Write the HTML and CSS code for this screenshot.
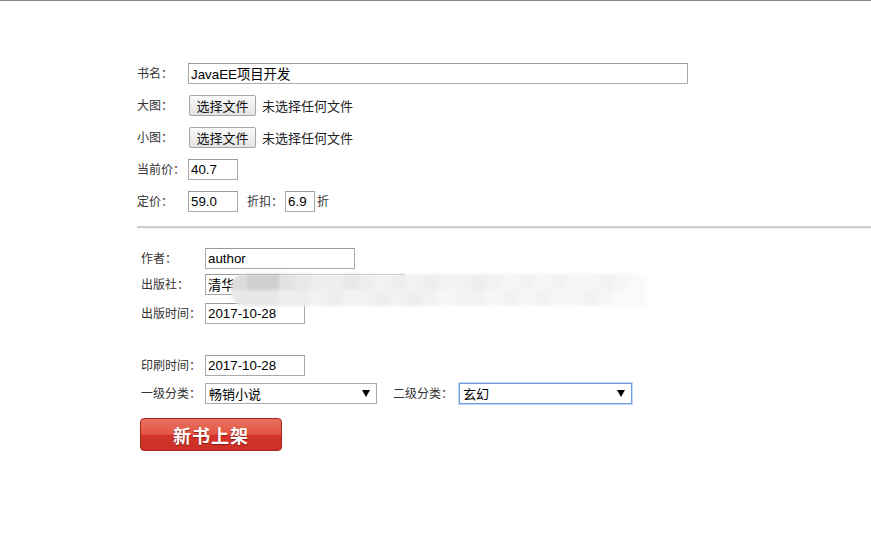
FILE: index.html
```html
<!DOCTYPE html>
<html lang="zh-CN">
<head>
<meta charset="utf-8">
<title>新书上架</title>
<link rel="stylesheet" href="styles.css">
</head>
<body>
<form class="page">
  <div class="basic">
    <div class="row">
      <span class="label">书名：</span>
      <input class="field w-title" type="text" value="JavaEE项目开发">
    </div>
    <div class="row">
      <span class="label">大图：</span>
      <span class="file"><button type="button" class="file-btn">选择文件</button><span class="file-name">未选择任何文件</span></span>
    </div>
    <div class="row">
      <span class="label">小图：</span>
      <span class="file"><button type="button" class="file-btn">选择文件</button><span class="file-name">未选择任何文件</span></span>
    </div>
    <div class="row">
      <span class="label">当前价：</span>
      <input class="field w-price" type="text" value="40.7">
    </div>
    <div class="row">
      <span class="label">定价：</span>
      <span class="inline">
        <input class="field w-price" type="text" value="59.0">
        <span class="label discount-label">折扣：</span>
        <input class="field w-disc" type="text" value="6.9">
        <span class="label unit">折</span>
      </span>
    </div>
  </div>
  <hr class="divider">
  <div class="detail">
    <div class="row2">
      <span class="label">作者：</span>
      <input class="field w-author" type="text" value="author">
    </div>
    <div class="row2 publisher">
      <span class="label">出版社：</span>
      <input class="field w-pub" type="text" value="清华大学出版社">
      <div class="mosaic" aria-hidden="true">
        <i class="g2"></i><i class="g1"></i><i class="g1"></i><i class="g3"></i><i class="g4"></i><i class="g5"></i><i class="g5"></i><i class="g4"></i><i class="g5"></i><i class="g6"></i><i class="g5"></i><i class="g6"></i><i class="g5"></i><i class="g6"></i><i class="g6"></i><i class="g5"></i><i class="g6"></i><i class="g7"></i><i class="g6"></i><i class="g7"></i><i class="g6"></i><i class="g7"></i><i class="g7"></i><i class="g6"></i><i class="g7"></i><i class="g8"></i>
        <i class="g4"></i><i class="g4"></i><i class="g4"></i><i class="g5"></i><i class="g5"></i><i class="g6"></i><i class="g5"></i><i class="g6"></i><i class="g6"></i><i class="g5"></i><i class="g6"></i><i class="g5"></i><i class="g6"></i><i class="g7"></i><i class="g6"></i><i class="g6"></i><i class="g7"></i><i class="g6"></i><i class="g7"></i><i class="g6"></i><i class="g7"></i><i class="g7"></i><i class="g6"></i><i class="g7"></i><i class="g8"></i><i class="g8"></i>
      </div>
    </div>
    <div class="row2 gap-s">
      <span class="label">出版时间：</span>
      <input class="field w-date" type="text" value="2017-10-28">
    </div>
    <div class="row2 gap-l">
      <span class="label">印刷时间：</span>
      <input class="field w-date" type="text" value="2017-10-28">
    </div>
    <div class="row2 gap-xs">
      <span class="label">一级分类：</span>
      <span class="select w-sel1"><span>畅销小说</span><svg class="arrow" width="8" height="7" viewBox="0 0 8 7"><path d="M0 0H8L4 7Z" fill="#000"/></svg></span>
      <span class="label cat2-label">二级分类：</span>
      <span class="select w-sel2 focused"><span>玄幻</span><svg class="arrow" width="8" height="7" viewBox="0 0 8 7"><path d="M0 0H8L4 7Z" fill="#000"/></svg></span>
    </div>
    <button type="button" class="submit">新书上架</button>
  </div>
</form>
</body>
</html>
```
FILE: styles.css
```css
html, body {
  margin: 0;
  padding: 0;
  background: #fff;
}
body {
  border-top: 1px solid #858585;
  font-family: "Noto Sans CJK SC", "Liberation Sans", sans-serif;
  font-size: 12px;
  color: #333;
}
.page {
  margin: 0;
}
.basic {
  margin-top: 56px;
  padding-left: 137px;
}
.row {
  display: flex;
  align-items: center;
  height: 32px;
}
.row .label {
  width: 51px;
  flex: none;
}
.label {
  font-size: 12px;
  line-height: 14px;
  color: #333;
  white-space: nowrap;
}
.field {
  box-sizing: border-box;
  height: 21px;
  margin: 0;
  padding: 0 2px;
  border: 1px solid #a9a9a9;
  border-top-color: #999;
  font-family: "Liberation Sans", "Noto Sans CJK SC", sans-serif;
  font-size: 13.33px;
  color: #000;
  background: #fff;
  outline: none;
}
.w-title { width: 500px; }
.w-price { width: 50px; }
.w-disc { width: 30px; }
.w-author { width: 150px; }
.w-pub { width: 200px; }
.w-date { width: 100px; }
.inline {
  display: flex;
  align-items: center;
}
.row .discount-label {
  width: auto;
  margin-left: 9px;
  margin-right: 2px;
}
.row .unit {
  width: auto;
  margin-left: 2px;
}
.file {
  display: flex;
  align-items: center;
}
.file-btn {
  box-sizing: border-box;
  width: 67px;
  height: 21px;
  margin: 0 0 0 1px;
  padding: 0;
  border: 1px solid #a6a6a6;
  border-radius: 2px;
  background: linear-gradient(#fbfbfb, #e3e3e3);
  font-family: "Noto Sans CJK SC", sans-serif;
  font-size: 13px;
  line-height: 19px;
  color: #111;
}
.file-name {
  margin-left: 6px;
  font-size: 13px;
  color: #222;
}
.divider {
  margin: 9px 0 0 137px;
  height: 0;
  border: 0;
  border-top: 2px solid #cecece;
  border-bottom: 1px solid #f2f2f2;
}
.detail {
  padding-left: 141px;
  margin-top: 16px;
}
.row2 {
  display: flex;
  align-items: center;
  height: 26px;
}
.row2 > .label:first-child {
  width: 64px;
  flex: none;
}
.gap-xs { margin-top: 2px; }
.gap-s { margin-top: 3px; }
.gap-l { margin-top: 26px; }
.publisher {
  position: relative;
}
.mosaic {
  position: absolute;
  left: 90px;
  top: 3px;
  width: 416px;
  height: 32px;
  display: grid;
  grid-template-columns: repeat(26, 16px);
  grid-template-rows: 16px 16px;
  border-radius: 14px 0 0 14px;
  overflow: hidden;
  filter: blur(1.5px);
}
.mosaic i { display: block; }
.g1 { background: #cfcfcf; }
.g2 { background: #dcdcdc; }
.g3 { background: #e2e2e2; }
.g4 { background: #e8e8e8; }
.g5 { background: #eeeeee; }
.g6 { background: #f2f2f2; }
.g7 { background: #f6f6f6; }
.g8 { background: #fafafa; }
.select {
  box-sizing: border-box;
  display: flex;
  align-items: center;
  justify-content: space-between;
  height: 21px;
  padding: 0 6px 0 3px;
  border: 1px solid #a9a9a9;
  background: #fff;
  font-size: 13px;
  color: #000;
}
.w-sel1 { width: 172px; }
.w-sel2 { width: 173px; }
.focused {
  border-color: #6f9be0;
  box-shadow: 0 0 0 1px #c4d8f6;
}
.arrow {
  display: block;
  flex: none;
}
.cat2-label {
  margin-left: 16px;
  width: 66px;
}
.submit {
  display: block;
  box-sizing: border-box;
  width: 142px;
  height: 33px;
  margin: 12px 0 0 -1px;
  padding: 0;
  border: 1px solid #a8271d;
  border-radius: 4px;
  background: linear-gradient(#e9705f 0%, #e25744 48%, #d4352a 52%, #cc2f25 100%);
  font-family: "Noto Sans CJK SC", sans-serif;
  font-size: 18px;
  font-weight: 700;
  letter-spacing: 1px;
  color: #fff;
  text-shadow: 0 1px 1px #8a1a12;
}
```
